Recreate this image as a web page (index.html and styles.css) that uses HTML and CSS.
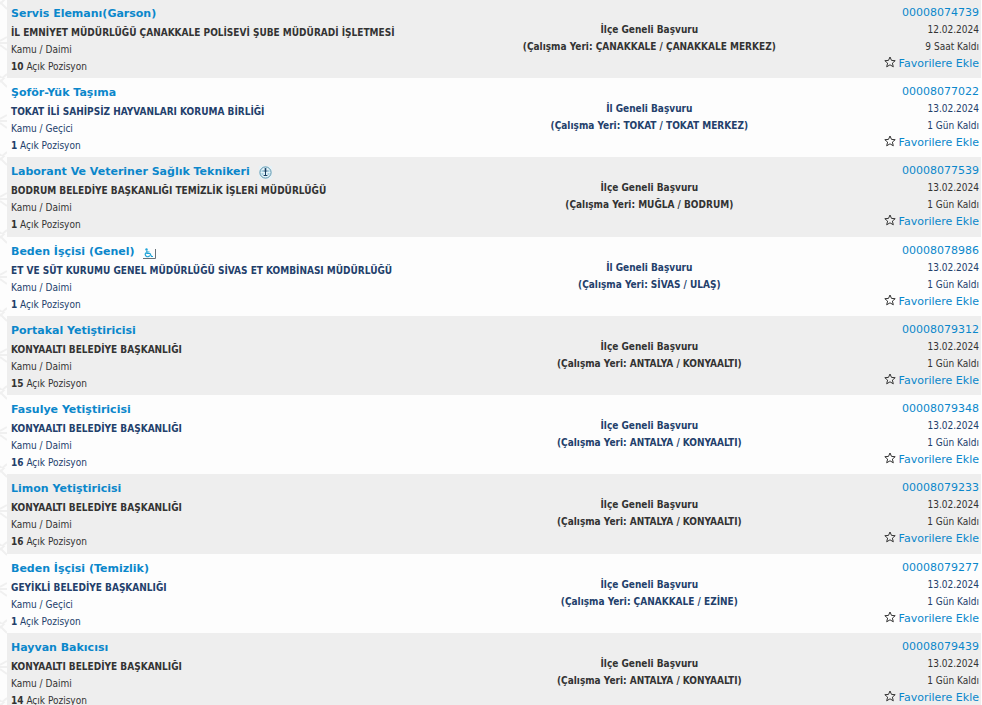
FILE: index.html
```html
<!DOCTYPE html>
<html lang="tr">
<head>
    <meta charset="UTF-8">
    <meta name="viewport" content="width=device-width, initial-scale=1.0">
    <title>Açık İş İlanları</title>
    <link rel="stylesheet" href="styles.css">
</head>
<body>
    <svg class="sprite" aria-hidden="true">
        <symbol id="star" viewBox="0 0 12 12">
            <path d="M6 1 L7.5 4.4 L11.2 4.7 L8.4 7.1 L9.3 10.8 L6 8.8 L2.7 10.8 L3.6 7.1 L0.8 4.7 L4.5 4.4 Z" fill="none" stroke="currentColor" stroke-width="1" stroke-linejoin="round"/>
        </symbol>
    </svg>
    <table class="jobs">
        <tbody>
            <tr>
                <td class="info">
                    <a class="title" href="#">Servis Elemanı(Garson)</a>
                    <div class="company">İL EMNİYET MÜDÜRLÜĞÜ ÇANAKKALE POLİSEVİ ŞUBE MÜDÜRADİ İŞLETMESİ</div>
                    <div>Kamu / Daimi</div>
                    <div><b>10</b> Açık Pozisyon</div>
                </td>
                <td class="place">
                    <div>İlçe Geneli Başvuru</div>
                    <div>(Çalışma Yeri: ÇANAKKALE / ÇANAKKALE MERKEZ)</div>
                </td>
                <td class="date">
                    <a href="#">00008074739</a>
                    <div>12.02.2024</div>
                    <div>9 Saat Kaldı</div>
                    <a href="#"><svg class="star"><use href="#star"/></svg>Favorilere Ekle</a>
                </td>
            </tr>
            <tr>
                <td class="info">
                    <a class="title" href="#">Şoför-Yük Taşıma</a>
                    <div class="company">TOKAT İLİ SAHİPSİZ HAYVANLARI KORUMA BİRLİĞİ</div>
                    <div>Kamu / Geçici</div>
                    <div><b>1</b> Açık Pozisyon</div>
                </td>
                <td class="place">
                    <div>İl Geneli Başvuru</div>
                    <div>(Çalışma Yeri: TOKAT / TOKAT MERKEZ)</div>
                </td>
                <td class="date">
                    <a href="#">00008077022</a>
                    <div>13.02.2024</div>
                    <div>1 Gün Kaldı</div>
                    <a href="#"><svg class="star"><use href="#star"/></svg>Favorilere Ekle</a>
                </td>
            </tr>
            <tr>
                <td class="info">
                    <a class="title" href="#">Laborant Ve Veteriner Sağlık Teknikeri
                        <svg class="badge" viewBox="0 0 13 13">
                            <rect width="13" height="13" fill="#e6f1f6"/>
                            <circle cx="6.5" cy="6.5" r="5.6" fill="#e3f2f8" stroke="#5a93ab" stroke-width="1"/>
                            <path d="M2.5 5 H4.5 M8.5 5 H10.5 M2.5 8 H4.5 M8.5 8 H10.5" stroke="#6fb3cf" stroke-width="1"/>
                            <path d="M6.5 3 V10 M4.6 5 H8.4 M4.6 9.5 H8.4" stroke="#173f63" stroke-width="1"/>
                            <circle cx="6.5" cy="3" r="1" fill="#173f63"/>
                        </svg>
                    </a>
                    <div class="company">BODRUM BELEDİYE BAŞKANLIĞI TEMİZLİK İŞLERİ MÜDÜRLÜĞÜ</div>
                    <div>Kamu / Daimi</div>
                    <div><b>1</b> Açık Pozisyon</div>
                </td>
                <td class="place">
                    <div>İlçe Geneli Başvuru</div>
                    <div>(Çalışma Yeri: MUĞLA / BODRUM)</div>
                </td>
                <td class="date">
                    <a href="#">00008077539</a>
                    <div>13.02.2024</div>
                    <div>1 Gün Kaldı</div>
                    <a href="#"><svg class="star"><use href="#star"/></svg>Favorilere Ekle</a>
                </td>
            </tr>
            <tr>
                <td class="info">
                    <a class="title" href="#">Beden İşçisi (Genel)
                        <svg class="badge" viewBox="0 0 13 13">
                            <path d="M12.5 3 V12.5 H0" fill="none" stroke="#67727a" stroke-width="1"/>
                            <circle cx="3.5" cy="3.4" r="1.2" fill="#1fa4d8"/>
                            <path d="M3.8 4.5 V7.5 H7 L8.5 10.5 H10 M4 6 H6.5" fill="none" stroke="#1fa4d8" stroke-width="1.2"/>
                            <path d="M3 6.6 A2.4 2.4 0 1 0 6.8 9.4" fill="none" stroke="#1fa4d8" stroke-width="1.2"/>
                        </svg>
                    </a>
                    <div class="company">ET VE SÜT KURUMU GENEL MÜDÜRLÜĞÜ SİVAS ET KOMBİNASI MÜDÜRLÜĞÜ</div>
                    <div>Kamu / Daimi</div>
                    <div><b>1</b> Açık Pozisyon</div>
                </td>
                <td class="place">
                    <div>İl Geneli Başvuru</div>
                    <div>(Çalışma Yeri: SİVAS / ULAŞ)</div>
                </td>
                <td class="date">
                    <a href="#">00008078986</a>
                    <div>13.02.2024</div>
                    <div>1 Gün Kaldı</div>
                    <a href="#"><svg class="star"><use href="#star"/></svg>Favorilere Ekle</a>
                </td>
            </tr>
            <tr>
                <td class="info">
                    <a class="title" href="#">Portakal Yetiştiricisi</a>
                    <div class="company">KONYAALTI BELEDİYE BAŞKANLIĞI</div>
                    <div>Kamu / Daimi</div>
                    <div><b>15</b> Açık Pozisyon</div>
                </td>
                <td class="place">
                    <div>İlçe Geneli Başvuru</div>
                    <div>(Çalışma Yeri: ANTALYA / KONYAALTI)</div>
                </td>
                <td class="date">
                    <a href="#">00008079312</a>
                    <div>13.02.2024</div>
                    <div>1 Gün Kaldı</div>
                    <a href="#"><svg class="star"><use href="#star"/></svg>Favorilere Ekle</a>
                </td>
            </tr>
            <tr>
                <td class="info">
                    <a class="title" href="#">Fasulye Yetiştiricisi</a>
                    <div class="company">KONYAALTI BELEDİYE BAŞKANLIĞI</div>
                    <div>Kamu / Daimi</div>
                    <div><b>16</b> Açık Pozisyon</div>
                </td>
                <td class="place">
                    <div>İlçe Geneli Başvuru</div>
                    <div>(Çalışma Yeri: ANTALYA / KONYAALTI)</div>
                </td>
                <td class="date">
                    <a href="#">00008079348</a>
                    <div>13.02.2024</div>
                    <div>1 Gün Kaldı</div>
                    <a href="#"><svg class="star"><use href="#star"/></svg>Favorilere Ekle</a>
                </td>
            </tr>
            <tr>
                <td class="info">
                    <a class="title" href="#">Limon Yetiştiricisi</a>
                    <div class="company">KONYAALTI BELEDİYE BAŞKANLIĞI</div>
                    <div>Kamu / Daimi</div>
                    <div><b>16</b> Açık Pozisyon</div>
                </td>
                <td class="place">
                    <div>İlçe Geneli Başvuru</div>
                    <div>(Çalışma Yeri: ANTALYA / KONYAALTI)</div>
                </td>
                <td class="date">
                    <a href="#">00008079233</a>
                    <div>13.02.2024</div>
                    <div>1 Gün Kaldı</div>
                    <a href="#"><svg class="star"><use href="#star"/></svg>Favorilere Ekle</a>
                </td>
            </tr>
            <tr>
                <td class="info">
                    <a class="title" href="#">Beden İşçisi (Temizlik)</a>
                    <div class="company">GEYİKLİ BELEDİYE BAŞKANLIĞI</div>
                    <div>Kamu / Geçici</div>
                    <div><b>1</b> Açık Pozisyon</div>
                </td>
                <td class="place">
                    <div>İlçe Geneli Başvuru</div>
                    <div>(Çalışma Yeri: ÇANAKKALE / EZİNE)</div>
                </td>
                <td class="date">
                    <a href="#">00008079277</a>
                    <div>13.02.2024</div>
                    <div>1 Gün Kaldı</div>
                    <a href="#"><svg class="star"><use href="#star"/></svg>Favorilere Ekle</a>
                </td>
            </tr>
            <tr>
                <td class="info">
                    <a class="title" href="#">Hayvan Bakıcısı</a>
                    <div class="company">KONYAALTI BELEDİYE BAŞKANLIĞI</div>
                    <div>Kamu / Daimi</div>
                    <div><b>14</b> Açık Pozisyon</div>
                </td>
                <td class="place">
                    <div>İlçe Geneli Başvuru</div>
                    <div>(Çalışma Yeri: ANTALYA / KONYAALTI)</div>
                </td>
                <td class="date">
                    <a href="#">00008079439</a>
                    <div>13.02.2024</div>
                    <div>1 Gün Kaldı</div>
                    <a href="#"><svg class="star"><use href="#star"/></svg>Favorilere Ekle</a>
                </td>
            </tr>
        </tbody>
    </table>
</body>
</html>
```

FILE: styles.css
```css
body {
    margin: 0;
    padding: 0 1px 0 7px;
    font-family: "DejaVu Sans Condensed", "DejaVu Sans", sans-serif;
    font-size: 10px;
    line-height: 17px;
    color: #23406b;
    /* faint line pattern behind the list */
    background: #fdfdfd url("data:image/svg+xml,%3Csvg xmlns='http://www.w3.org/2000/svg' width='60' height='78'%3E%3Cg fill='none' stroke='%23f0f0f0' stroke-width='2'%3E%3Cpath d='M0 41 L7 37 M0 43 H7 M0 45 L7 50 M0 76 L7 86 M0 80 L7 74 M0 2 L7 9 M0 4 L7 -3'/%3E%3C/g%3E%3C/svg%3E") repeat-y;
    overflow: hidden;
}
.sprite {
    display: none;
}
.jobs {
    width: 100%;
    table-layout: fixed;
    border-collapse: collapse;
}
.jobs tr {
    background: #fdfdfd;
}
.jobs tr:nth-child(odd) {
    background: #eee;
    color: #333;
}
.jobs td {
    padding: 5px 2px 3px 4px;
    vertical-align: top;
}
.jobs tr:first-child td {
    padding-top: 4px;
}
.jobs tr:nth-child(4n+3) td {
    padding-bottom: 4px;
}
a {
    display: block;
    font-family: "DejaVu Sans", sans-serif;
    font-size: 11px;
    color: #0b87cb;
    text-decoration: none;
}
.info {
    width: 49%;
}
.title {
    height: 20px;
    line-height: 19px;
    font-weight: bold;
}
.info div {
    height: 17px;
}
.company, .place {
    font-weight: bold;
}
.jobs .place {
    width: 34%;
    padding-top: 22px;
    padding-right: 0;
    text-align: center;
}
.jobs tr:first-child .place {
    padding-top: 21px;
}
.date {
    width: 17%;
    text-align: right;
}
.badge {
    width: 13px;
    height: 13px;
    margin-left: 5px;
    vertical-align: -4px;
}
.star {
    width: 12px;
    height: 12px;
    margin-right: 3px;
    color: #333;
    vertical-align: -1px;
}
```
